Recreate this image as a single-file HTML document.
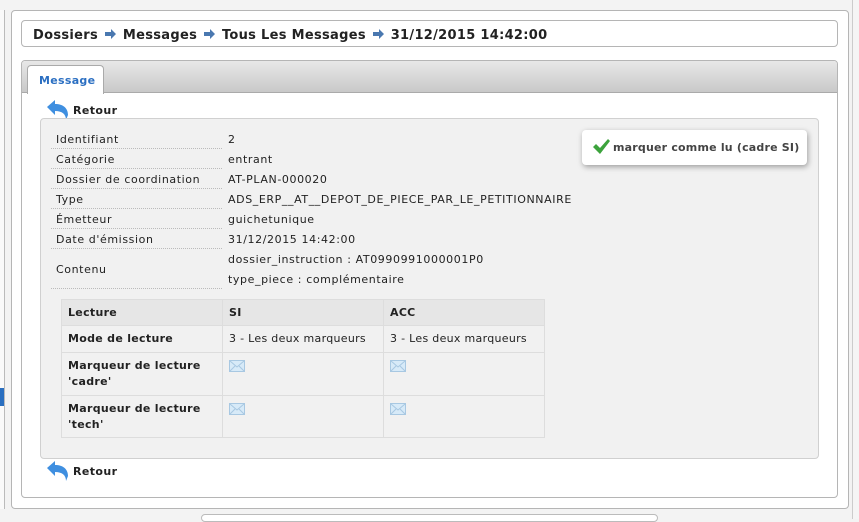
<!DOCTYPE html>
<html><head><meta charset="utf-8"><style>
*{box-sizing:border-box;margin:0;padding:0}
body{width:859px;height:519px;background:#f3f3f3;font-family:"DejaVu Sans","Liberation Sans",sans-serif;font-size:11px;letter-spacing:0.6px;color:#222;position:relative;overflow:hidden}
.a{position:absolute}
.outer{left:11px;top:10px;width:838px;height:499px;background:#fff;border:1px solid #b5b5b5;border-radius:4px}
.bc{left:21px;top:20px;width:817px;height:27px;border:1px solid #b5b5b5;border-radius:4px;background:#fff;font-weight:bold;font-size:13px;letter-spacing:0.3px;padding:7px 0 0 11px;color:#222;white-space:nowrap}
.arr{display:inline-block;width:13px;margin:0 6px 0 1px;vertical-align:-1px}
.tp{left:21px;top:60px;width:817px;height:438px;border:1px solid #b5b5b5;border-radius:4px;background:#fff;overflow:hidden}
.th{left:0;top:0;width:817px;height:32px;background:linear-gradient(#e8e8e8,#c9c9c9);border-bottom:1px solid #aaa}
.tab{left:5px;top:4px;width:77px;height:29px;background:#fff;border:1px solid #aaa;border-bottom:none;border-radius:4px 4px 0 0;color:#2b6fc2;font-weight:bold;font-size:11px;letter-spacing:0.3px;padding:8px 0 0 11px}
.box{left:40px;top:118px;width:779px;height:341px;background:#f1f1f1;border:1px solid #d0d0d0;border-radius:4px}
.lbl{left:56px;width:166px}
.dot{left:51px;width:171px;border-bottom:1px dotted #bbb}
.val{left:228px;white-space:nowrap}
.ret{font-weight:bold;font-size:11px;letter-spacing:0.4px;white-space:nowrap}
.btn{left:582px;top:130px;width:225px;height:35px;background:#fff;border-radius:4px;box-shadow:1px 2px 6px rgba(0,0,0,.35);font-weight:bold;color:#444;padding:11px 0 0 31px;font-size:11px;letter-spacing:0.2px;white-space:nowrap}
table{position:absolute;left:61px;top:299px;border-collapse:collapse;width:484px}
td{border:1px solid #ddd;vertical-align:top;padding:0 6px;font-size:11px;line-height:16px;letter-spacing:0.3px}
tr.h td{background:#e6e6e6;font-weight:bold;height:26px;vertical-align:middle}
td.b{font-weight:bold;letter-spacing:0.3px}
.env{display:block;margin-top:7px}
</style></head><body>
<div class="a" style="left:0;top:10px;width:5px;height:499px;background:#fafafa;border-right:1px solid #bbb"></div>
<div class="a" style="left:0;top:388px;width:4px;height:18px;background:#2a6fc0"></div>
<div class="a" style="left:852px;top:0;width:7px;height:519px;background:#f5f5f5;border-left:1px solid #ccc"></div>
<div class="a" style="left:201px;top:514px;width:457px;height:8px;border:1px solid #bbb;border-radius:4px;background:#fff"></div>
<div class="a outer"></div>
<div class="a bc">Dossiers <svg class="arr" viewBox="0 0 13 12"><path d="M1 4h6V1l5 5-5 5V8H1z" fill="#4a78b0"/></svg>Messages <svg class="arr" viewBox="0 0 13 12"><path d="M1 4h6V1l5 5-5 5V8H1z" fill="#4a78b0"/></svg>Tous Les Messages <svg class="arr" viewBox="0 0 13 12"><path d="M1 4h6V1l5 5-5 5V8H1z" fill="#4a78b0"/></svg>31/12/2015 14:42:00</div>
<div class="a tp"><div class="a th"></div><div class="a tab">Message</div></div>
<svg class="a" style="left:46px;top:99px" width="24" height="22" viewBox="0 0 24 22"><path d="M1 8L9 1v4c8 0 13 4 13 11l-2 5c0-6-4-9-11-9v4z" fill="#3f8fe0"/></svg>
<div class="a ret" style="left:73px;top:104px">Retour</div>
<div class="a box"></div>
<div class="a btn">marquer comme lu (cadre SI)</div>
<svg class="a" style="left:592px;top:138px" width="18" height="17" viewBox="0 0 18 17"><path d="M1 9l3-3 4 4 8-9 2 2-10 13z" fill="#3ca33c"/></svg>
<div class="a lbl" style="top:133px">Identifiant</div><div class="a dot" style="top:148px"></div><div class="a val" style="top:133px">2</div>
<div class="a lbl" style="top:153px">Catégorie</div><div class="a dot" style="top:168px"></div><div class="a val" style="top:153px">entrant</div>
<div class="a lbl" style="top:173px">Dossier de coordination</div><div class="a dot" style="top:188px"></div><div class="a val" style="top:173px">AT-PLAN-000020</div>
<div class="a lbl" style="top:193px">Type</div><div class="a dot" style="top:208px"></div><div class="a val" style="top:193px">ADS_ERP__AT__DEPOT_DE_PIECE_PAR_LE_PETITIONNAIRE</div>
<div class="a lbl" style="top:213px">Émetteur</div><div class="a dot" style="top:228px"></div><div class="a val" style="top:213px">guichetunique</div>
<div class="a lbl" style="top:233px">Date d'émission</div><div class="a dot" style="top:248px"></div><div class="a val" style="top:233px">31/12/2015 14:42:00</div>
<div class="a lbl" style="top:263px">Contenu</div><div class="a dot" style="top:288px"></div>
<div class="a val" style="top:253px">dossier_instruction : AT0990991000001P0</div>
<div class="a val" style="top:273px">type_piece : complémentaire</div>
<table>
<tr class="h"><td style="width:161px">Lecture</td><td style="width:161px">SI</td><td>ACC</td></tr>
<tr><td class="b" style="height:27px;vertical-align:middle">Mode de lecture</td><td style="vertical-align:middle">3 - Les deux marqueurs</td><td style="vertical-align:middle">3 - Les deux marqueurs</td></tr>
<tr><td class="b" style="height:43px;padding-top:5px">Marqueur de lecture 'cadre'</td><td><svg class="env" width="16" height="12" viewBox="0 0 16 12"><rect x=".5" y=".5" width="15" height="11" fill="#d7eaf8" stroke="#a8c8e2"/><path d="M1 1l7 6 7-6M1 11l5-5M15 11l-5-5" fill="none" stroke="#a8c8e2"/></svg></td><td><svg class="env" width="16" height="12" viewBox="0 0 16 12"><rect x=".5" y=".5" width="15" height="11" fill="#d7eaf8" stroke="#a8c8e2"/><path d="M1 1l7 6 7-6M1 11l5-5M15 11l-5-5" fill="none" stroke="#a8c8e2"/></svg></td></tr>
<tr><td class="b" style="height:42px;padding-top:5px">Marqueur de lecture 'tech'</td><td><svg class="env" width="16" height="12" viewBox="0 0 16 12"><rect x=".5" y=".5" width="15" height="11" fill="#d7eaf8" stroke="#a8c8e2"/><path d="M1 1l7 6 7-6M1 11l5-5M15 11l-5-5" fill="none" stroke="#a8c8e2"/></svg></td><td><svg class="env" width="16" height="12" viewBox="0 0 16 12"><rect x=".5" y=".5" width="15" height="11" fill="#d7eaf8" stroke="#a8c8e2"/><path d="M1 1l7 6 7-6M1 11l5-5M15 11l-5-5" fill="none" stroke="#a8c8e2"/></svg></td></tr>
</table>
<svg class="a" style="left:46px;top:460px" width="24" height="22" viewBox="0 0 24 22"><path d="M1 8L9 1v4c8 0 13 4 13 11l-2 5c0-6-4-9-11-9v4z" fill="#3f8fe0"/></svg>
<div class="a ret" style="left:73px;top:465px">Retour</div>
</body></html>
